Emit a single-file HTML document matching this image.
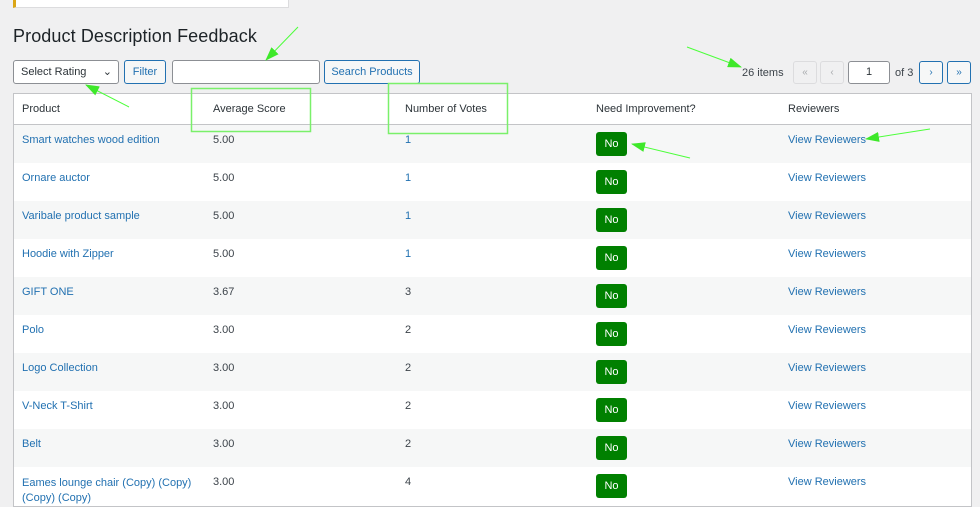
<!DOCTYPE html>
<html><head><style>
body{margin:0;width:980px;height:503px;overflow:hidden;background:#f0f0f1;font-family:"Liberation Sans",sans-serif;color:#3c434a;position:relative}
.top{position:absolute;left:13px;top:-2px;width:272px;height:8px;background:#fff;border:1px solid #dcdcde;border-left:3px solid #dba617}
h1{position:absolute;left:13px;top:26px;margin:0;font-size:18px;font-weight:400;color:#1d2327;letter-spacing:0.1px}
.ctl{position:absolute;top:60px;height:24px;box-sizing:border-box;border-radius:3px;font-size:11px;line-height:22px}
.sel{left:13px;width:106px;border:1px solid #8c8f94;background:#fff;padding-left:7px;color:#2c3338}
.btn{border:1px solid #2271b1;background:#f6f7f7;color:#2271b1;text-align:center}
.inp{left:172px;width:148px;border:1px solid #8c8f94;background:#fff}
.pg{position:absolute;top:61px;height:23px;width:24px;box-sizing:border-box;border-radius:3px;font-size:10px;text-align:center;line-height:21px}
table{position:absolute;left:13px;top:93px;width:959px;border-collapse:collapse;background:#fff;border:1px solid #c3c4c7;font-size:11px}
th{font-weight:400;text-align:left;height:30px;border-bottom:1px solid #c3c4c7;color:#2c3338;padding:0}
td{height:38px;vertical-align:top;padding:9px 0 0 0;box-sizing:border-box}
tr:nth-child(odd) td{background:#f6f7f7}
a{color:#2271b1;text-decoration:none}
.c1{padding-left:8px;width:191px}.c2{width:192px}.c3{width:191px}.c4{width:192px}
.no{display:inline-block;background:#008000;color:#fff;border-radius:3px;width:31px;height:24px;line-height:24px;text-align:center;margin-top:-2px;font-size:11px}
</style></head><body>
<div class="top"></div>
<h1>Product Description Feedback</h1>
<div class="ctl sel">Select Rating<span style="position:absolute;right:6px;top:0;font-size:11px">&#8964;</span></div>
<div class="ctl btn" style="left:124px;width:42px">Filter</div>
<div class="ctl inp"></div>
<div class="ctl btn" style="left:324px;width:96px">Search Products</div>
<div style="position:absolute;left:742px;top:67px;font-size:11px">26 items</div>
<div class="pg" style="left:793px;border:1px solid #dcdcde;color:#a7aaad">«</div>
<div class="pg" style="left:820px;border:1px solid #dcdcde;color:#a7aaad">‹</div>
<div class="pg" style="left:848px;width:42px;border:1px solid #8c8f94;background:#fff;font-size:11px;color:#2c3338">1</div>
<div style="position:absolute;left:895px;top:67px;font-size:11px">of 3</div>
<div class="pg" style="left:919px;border:1px solid #2271b1;color:#2271b1;background:#f6f7f7">›</div>
<div class="pg" style="left:947px;border:1px solid #2271b1;color:#2271b1;background:#f6f7f7">»</div>
<table>
<thead><tr><th class="c1">Product</th><th class="c2">Average Score</th><th class="c3">Number of Votes</th><th class="c4">Need Improvement?</th><th>Reviewers</th></tr></thead>
<tbody>
<tr><td class="c1"><a>Smart watches wood edition</a></td><td>5.00</td><td><a>1</a></td><td><span class="no">No</span></td><td><a>View Reviewers</a></td></tr>
<tr><td class="c1"><a>Ornare auctor</a></td><td>5.00</td><td><a>1</a></td><td><span class="no">No</span></td><td><a>View Reviewers</a></td></tr>
<tr><td class="c1"><a>Varibale product sample</a></td><td>5.00</td><td><a>1</a></td><td><span class="no">No</span></td><td><a>View Reviewers</a></td></tr>
<tr><td class="c1"><a>Hoodie with Zipper</a></td><td>5.00</td><td><a>1</a></td><td><span class="no">No</span></td><td><a>View Reviewers</a></td></tr>
<tr><td class="c1"><a>GIFT ONE</a></td><td>3.67</td><td>3</td><td><span class="no">No</span></td><td><a>View Reviewers</a></td></tr>
<tr><td class="c1"><a>Polo</a></td><td>3.00</td><td>2</td><td><span class="no">No</span></td><td><a>View Reviewers</a></td></tr>
<tr><td class="c1"><a>Logo Collection</a></td><td>3.00</td><td>2</td><td><span class="no">No</span></td><td><a>View Reviewers</a></td></tr>
<tr><td class="c1"><a>V-Neck T-Shirt</a></td><td>3.00</td><td>2</td><td><span class="no">No</span></td><td><a>View Reviewers</a></td></tr>
<tr><td class="c1"><a>Belt</a></td><td>3.00</td><td>2</td><td><span class="no">No</span></td><td><a>View Reviewers</a></td></tr>
<tr><td class="c1" style="line-height:15px"><a>Eames lounge chair (Copy) (Copy)<br>(Copy) (Copy)</a></td><td>3.00</td><td>4</td><td><span class="no">No</span></td><td><a>View Reviewers</a></td></tr>
</tbody></table>
<svg width="980" height="503" style="position:absolute;left:0;top:0" fill="none" stroke="#4cff3a" stroke-width="1">
<defs><marker id="a" markerWidth="14" markerHeight="10" refX="13" refY="5" orient="auto" markerUnits="userSpaceOnUse"><path d="M0,0L14,5L0,10z" fill="#3ee82a" stroke="none"/></marker></defs>
<rect x="191.5" y="88.5" width="119" height="43" stroke="#7af06a" stroke-width="1.5"/>
<rect x="388.5" y="83.5" width="119" height="50" stroke="#7af06a" stroke-width="1.5"/>
<line x1="298" y1="27" x2="266" y2="60" marker-end="url(#a)"/>
<line x1="129" y1="107" x2="86" y2="85" marker-end="url(#a)"/>
<line x1="687" y1="47" x2="741" y2="67" marker-end="url(#a)"/>
<line x1="690" y1="158" x2="632" y2="144" marker-end="url(#a)"/>
<line x1="930" y1="129" x2="866" y2="139" marker-end="url(#a)"/>
</svg>
</body></html>
